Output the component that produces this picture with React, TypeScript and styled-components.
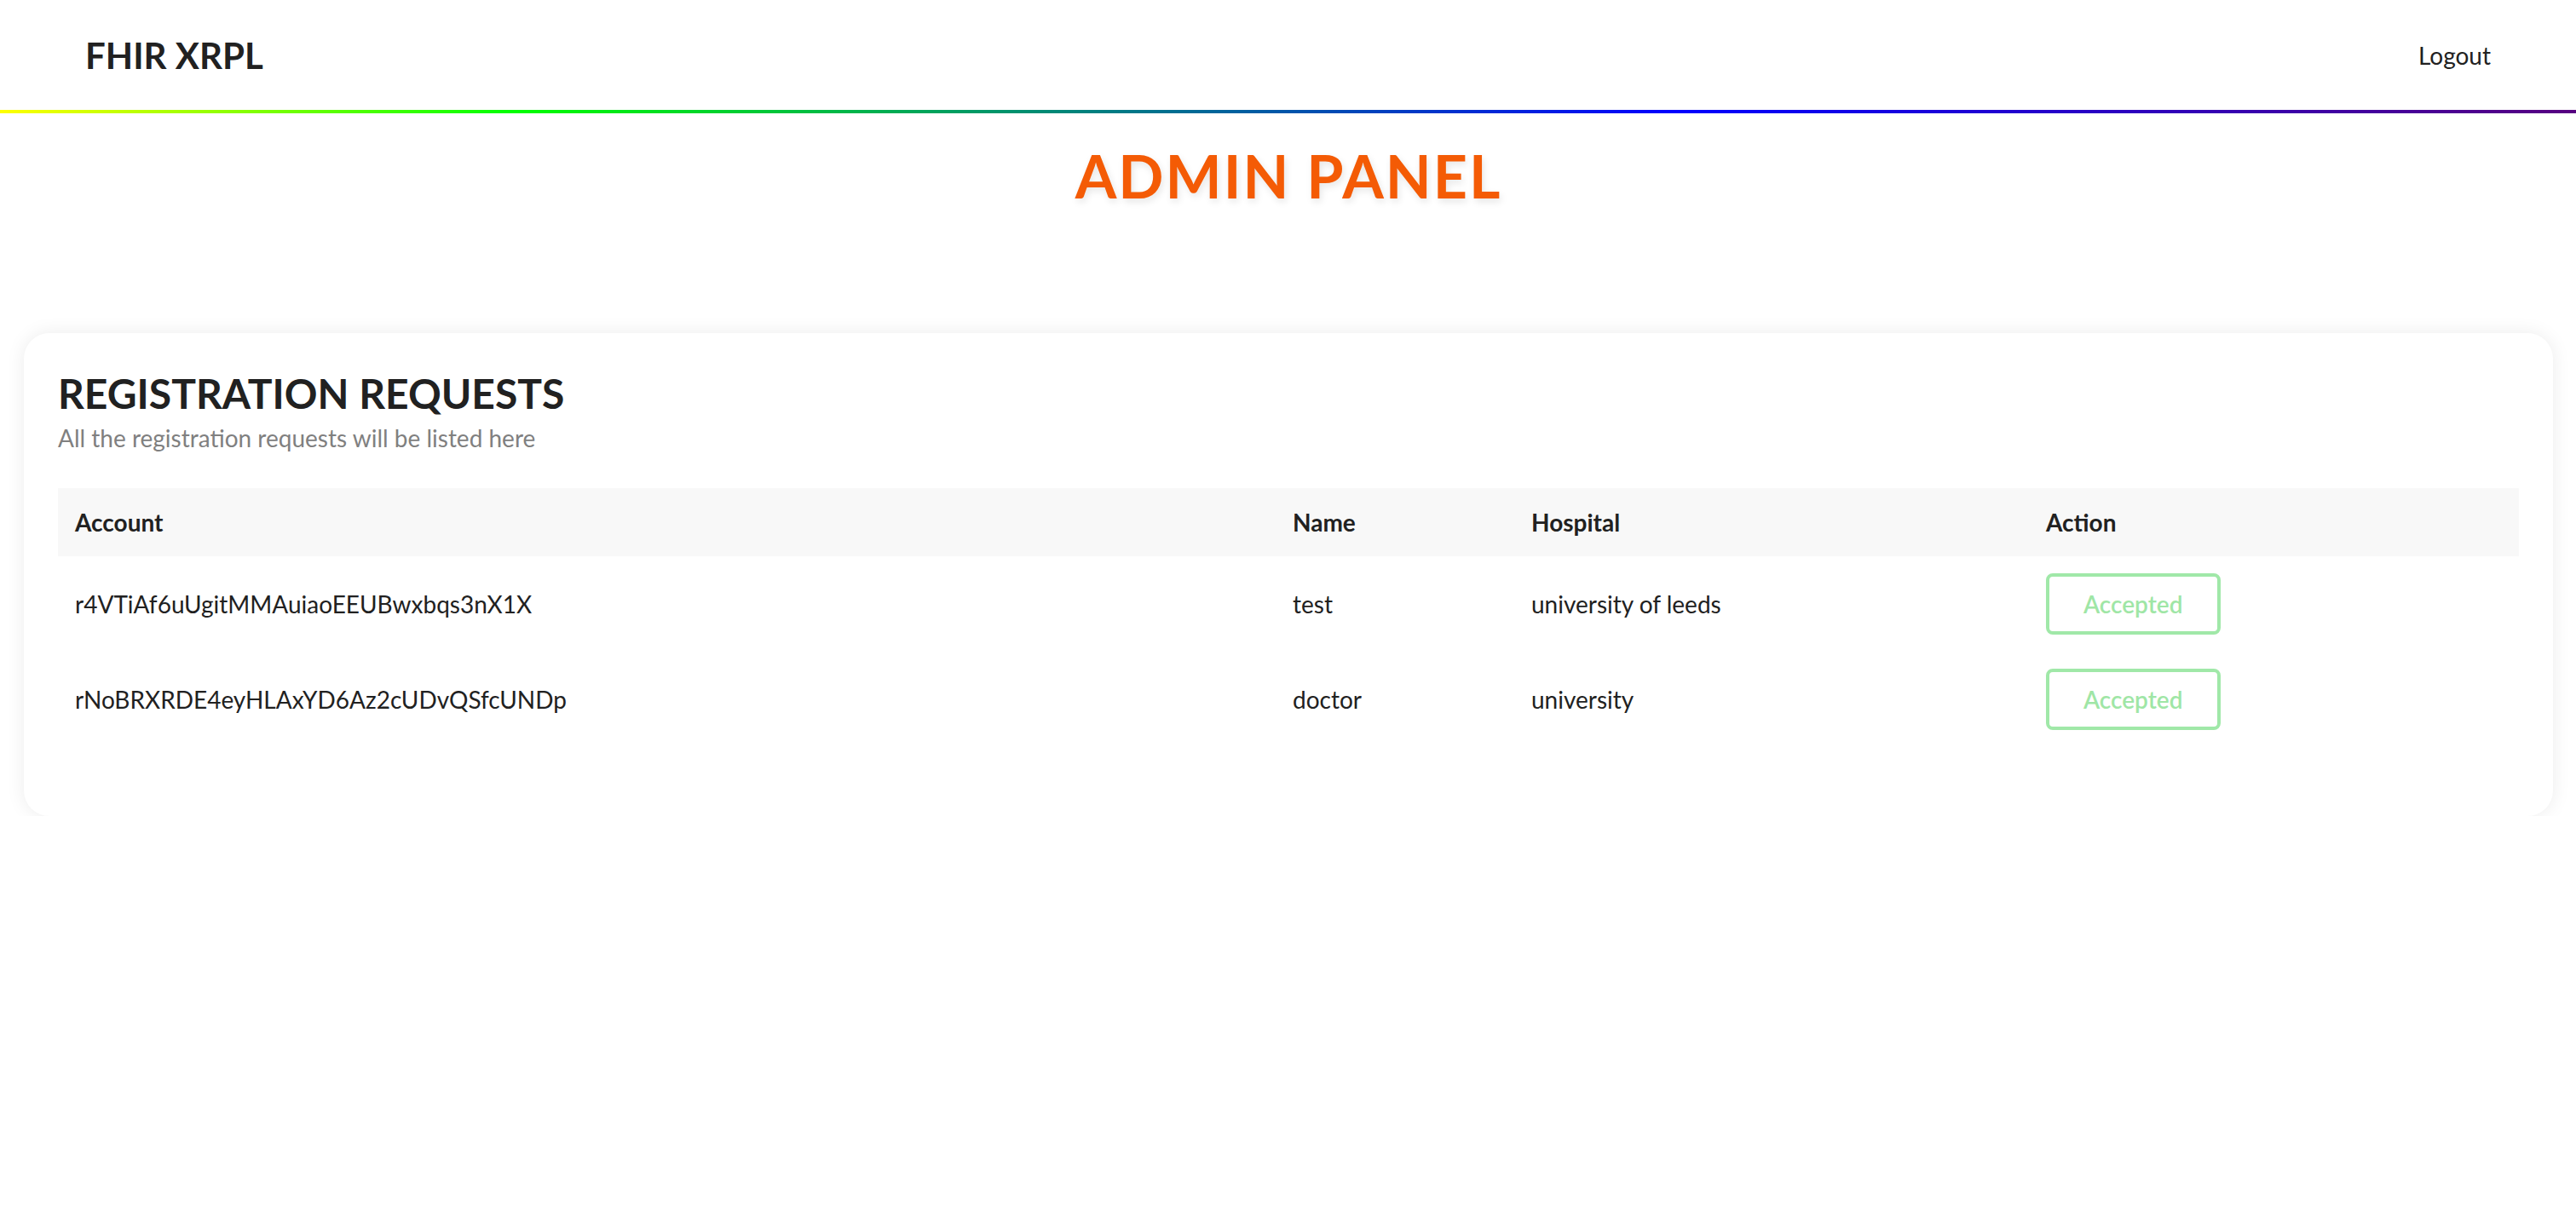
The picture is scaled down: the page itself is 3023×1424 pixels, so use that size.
import React from 'react'
import styled, { createGlobalStyle } from 'styled-components'

const GlobalStyle = createGlobalStyle`
	body {
		margin: 0;
		background: #ffffff;
		font-family: Lato, 'Open Sans', sans-serif;
		color: #212121;
	}
`

const Header = styled.header`
	display: flex;
	align-items: center;
	justify-content: space-between;
	height: 129px;
	padding: 0 100px;
	background: #ffffff;
`

const Brand = styled.div`
	font-size: 42px;
	font-weight: 700;
	color: #212121;
`

const NavLink = styled.a`
	font-size: 28px;
	color: #212121;
	text-decoration: none;
	cursor: pointer;
`

const RainbowBar = styled.div`
	height: 4px;
	background: linear-gradient(
		to right,
		#ffff00 0%,
		#00ff00 20%,
		#0000ff 65%,
		#570080 100%
	);
`

const Main = styled.main`
	display: flex;
	flex-direction: column;
	padding: 31px 27px 0 28px;
`

const PageTitle = styled.h1`
	margin: 0;
	text-align: center;
	font-size: 70px;
	font-weight: 700;
	letter-spacing: 2px;
	color: #f45b05;
	text-shadow: 2px 4px 8px rgba(0, 0, 0, 0.1);
`

const Card = styled.section`
	margin-top: 143px;
	padding: 42px 40px 81px;
	background: #ffffff;
	border-radius: 30px;
	box-shadow: 0 0 22px rgba(0, 0, 0, 0.08);
`

const CardTitle = styled.h2`
	margin: 0;
	font-size: 48px;
	font-weight: 700;
	color: #212121;
`

const CardSubtitle = styled.p`
	margin: 7px 0 0;
	font-size: 28px;
	color: #808080;
`

const Table = styled.div`
	margin-top: 42px;
	display: grid;
	grid-template-columns: 1429fr 280fr 604fr 575fr;
`

const HeadCell = styled.div`
	display: flex;
	align-items: center;
	height: 80px;
	padding: 0 20px;
	background: #f8f8f8;
	font-size: 28px;
	font-weight: 700;
	color: #212121;
`

const Cell = styled.div`
	display: flex;
	align-items: center;
	height: 112px;
	padding: 0 20px;
	font-size: 28px;
	color: #212121;
`

const StatusButton = styled.button<{ $accepted?: boolean }>`
	height: 72px;
	padding: 0 40px;
	border: 4px solid ${(p) => (p.$accepted ? '#a0e8a8' : '#4caf50')};
	border-radius: 8px;
	background: #ffffff;
	font-family: Lato, 'Open Sans', sans-serif;
	font-size: 28px;
	font-weight: 600;
	color: ${(p) => (p.$accepted ? '#9fe6a6' : '#4caf50')};
	cursor: ${(p) => (p.$accepted ? 'default' : 'pointer')};
`

interface Request {
	account: string
	name: string
	hospital: string
	accepted: boolean
}

const requests: Request[] = [
	{
		account: 'r4VTiAf6uUgitMMAuiaoEEUBwxbqs3nX1X',
		name: 'test',
		hospital: 'university of leeds',
		accepted: true,
	},
	{
		account: 'rNoBRXRDE4eyHLAxYD6Az2cUDvQSfcUNDp',
		name: 'doctor',
		hospital: 'university',
		accepted: true,
	},
]

export default function App() {
	return (
		<>
			<GlobalStyle />
			<Header>
				<Brand>FHIR XRPL</Brand>
				<NavLink>Logout</NavLink>
			</Header>
			<RainbowBar />
			<Main>
				<PageTitle>ADMIN PANEL</PageTitle>
				<Card>
					<CardTitle>REGISTRATION REQUESTS</CardTitle>
					<CardSubtitle>All the registration requests will be listed here</CardSubtitle>
					<Table>
						<HeadCell>Account</HeadCell>
						<HeadCell>Name</HeadCell>
						<HeadCell>Hospital</HeadCell>
						<HeadCell>Action</HeadCell>
						{requests.map((r) => (
							<React.Fragment key={r.account}>
								<Cell>{r.account}</Cell>
								<Cell>{r.name}</Cell>
								<Cell>{r.hospital}</Cell>
								<Cell>
									<StatusButton $accepted={r.accepted} disabled={r.accepted}>
										{r.accepted ? 'Accepted' : 'Accept'}
									</StatusButton>
								</Cell>
							</React.Fragment>
						))}
					</Table>
				</Card>
			</Main>
		</>
	)
}
